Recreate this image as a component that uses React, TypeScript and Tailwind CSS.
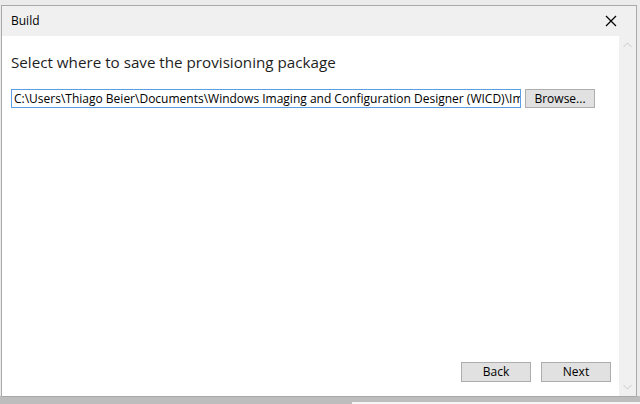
export default function App() {
    return (
        <div className="w-[640px] h-[404px] bg-[#ebebeb] relative overflow-hidden" style={{ fontFamily: '"Open Sans", "Noto Sans", sans-serif' }}>
            <div className="absolute left-0 right-0 top-[396px] h-[8px] bg-[#bdbdbd]" />
            <div className="absolute left-[352px] right-0 top-[402px] h-[2px] bg-[#f5f5f5]" />
            <div className="absolute left-[1px] top-[5px] w-[636px] h-[392px] border border-[#a9a9a9] flex flex-col bg-white">
                <div className="h-[30px] bg-[#f0f0f0] flex items-center justify-between pl-[9px] pr-[19px] shrink-0">
                    <span className="text-[12px] text-black">Build</span>
                    <svg width="12" height="12" viewBox="0 0 12 12">
                        <path d="M1 1 L11 11 M11 1 L1 11" stroke="#000" strokeWidth="1.2" />
                    </svg>
                </div>
                <div className="flex flex-1 min-h-0">
                    <div className="flex-1 flex flex-col pl-[9px] pr-[8px]">
                        <h1 className="text-[15.2px] text-[#1e1e1e] mt-[15px] leading-[22px]">Select where to save the provisioning package</h1>
                        <div className="flex items-center mt-[16px] gap-[4px]">
                            <div className="w-[510px] h-[19px] border border-[#5c9ee6] flex items-center pl-[2px] overflow-hidden whitespace-nowrap">
                                <span className="text-[12px] text-black leading-none">C:\Users\Thiago Beier\Documents\Windows Imaging and Configuration Designer (WICD)\Im</span>
                            </div>
                            <button className="w-[70px] h-[19px] bg-[#e1e1e1] border border-[#adadad] text-[12px] text-black leading-none">Browse...</button>
                        </div>
                        <div className="flex-1" />
                        <div className="flex justify-end gap-[10px] mb-[14px]">
                            <button className="w-[70px] h-[20px] bg-[#e1e1e1] border border-[#adadad] text-[12px] text-black leading-none">Back</button>
                            <button className="w-[70px] h-[20px] bg-[#e1e1e1] border border-[#adadad] text-[12px] text-black leading-none">Next</button>
                        </div>
                    </div>
                    <div className="w-[17px] bg-[#f0f0f0] flex flex-col justify-between items-center py-[6px]">
                        <svg width="9" height="6" viewBox="0 0 9 6">
                            <path d="M0.5 5 L4.5 1 L8.5 5" stroke="#c8c8c8" strokeWidth="1" fill="none" />
                        </svg>
                        <svg width="9" height="6" viewBox="0 0 9 6">
                            <path d="M0.5 1 L4.5 5 L8.5 1" stroke="#c8c8c8" strokeWidth="1" fill="none" />
                        </svg>
                    </div>
                </div>
            </div>
        </div>
    )
}
